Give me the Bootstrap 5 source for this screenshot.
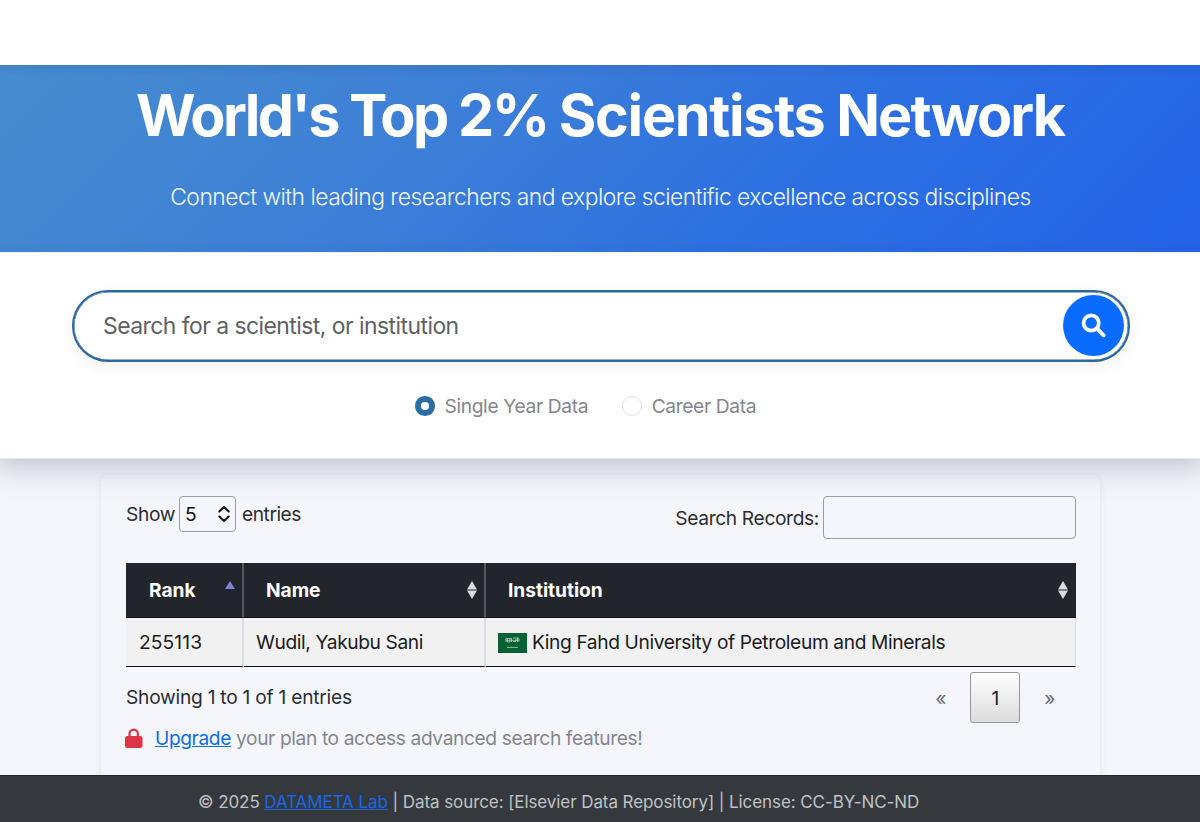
<!DOCTYPE html>
<html lang="en">
<head>
<meta charset="utf-8">
<meta name="viewport" content="width=device-width, initial-scale=1">
<title>World's Top 2% Scientists Network</title>
<link href="https://cdn.jsdelivr.net/npm/bootstrap@5.3.0/dist/css/bootstrap.min.css" rel="stylesheet">
<style>
body{font-family:Inter,"Liberation Sans",sans-serif;font-size:19.2px;line-height:28px;letter-spacing:-.36px;color:#2b2d32;background:#f5f6fb;height:822px;overflow:hidden}
.topbar{height:65px}
.hero{height:187px;background:linear-gradient(180deg,rgba(30,60,130,.12),transparent 12px,transparent 172px,rgba(30,60,140,.05)),linear-gradient(135deg,#478dce 0%,#3b7dd8 40%,#2d70e1 65%,#2463e8 100%)}
.hero h1{font-size:57.5px;line-height:68px;letter-spacing:-1.92px;padding-top:16px;margin:0 0 32px}
.hero h1 .tight{letter-spacing:-2.5px}
.hero h1 .wide{letter-spacing:-1.3px}
.hero p{font-size:22.9px;line-height:32px;font-weight:300;letter-spacing:-.54px;color:#eef6fe;padding-left:1px}
.search-zone{height:207px;position:relative;box-shadow:0 2px 28px 6px rgba(40,60,80,.27);clip-path:inset(0 0 -60px 0);border-bottom:1px solid #e6e8ec;padding-top:37px;border-top:1px solid #eaf3fc}
.search-pill{width:1058px;height:72px;margin-left:72px;border:2px solid #2b6799;padding:0 4px 0 30px;box-shadow:inset 0 0 0 .5px #2b6799,0 5px 16px rgba(0,0,0,.06)}
.search-pill input{font-size:22.9px;letter-spacing:-.53px;background:none;outline:0;height:60px;margin-left:-1px}
.search-pill input::placeholder{color:#5f6063;opacity:1}
.search-go{width:61px;height:61px;background:#0a6cff;margin-top:-1px}
.radio-row{margin:30px 0 0 415px;color:#85858f;height:28px}
.radio-row input{appearance:none;width:19.5px;height:19.5px;border:1px solid #dedfe3;border-radius:50%;margin:0 10px 0 0;background:#fff}
.radio-row input:checked{border:6px solid #2b6ca3}
.radio-row .second{margin-left:34px}
.panel{width:999px;height:300px;margin:16px 0 0 101px;padding:21px 24px 0 25px;border-radius:8px 8px 0 0;box-shadow:0 2px 6px rgba(50,60,80,.1)}
.len-box{width:57px;height:36px;border:1px solid #9b9da3;border-radius:4px;margin:0 6px 0 4px;padding:0 5px 0 5px;color:#111}
.entries{letter-spacing:-.5px}
.filter-box{width:253px;height:43px;border:1px solid #9b9da3;border-radius:4px;background:transparent}
.tools{height:67px}
.grid{table-layout:fixed;border-collapse:separate;border-spacing:0;width:950px}
.grid th{height:55px;background:#22252c;color:#fff;font-weight:700;letter-spacing:-.05px;padding:0 3px 0 22px;border-right:2px solid #54575c;border-bottom:1px solid #111}
.grid th:first-child{padding-left:23px}
.grid td{height:49px;background:#f1f1f1;color:#1b1b1d;padding:0 12px;letter-spacing:-.39px;border-right:2px solid #dadde2;border-bottom:1px solid #111}
.grid .rank{letter-spacing:.1px;padding-left:13px}
.grid th:last-child{border-right:0;padding-right:4px}.grid td:last-child{border-right:1px solid #dadde2}
.flag{margin:2px 1px 0 0}
.below{height:57px;padding-top:5px}
.info{margin-top:11px;letter-spacing:-.25px}
.pager{padding-right:21px;height:51px}
.pager span{color:#66686d}
.pager .current{width:50px;height:51px;margin:0 24px;border:1px solid #97979b;border-radius:3px;background:linear-gradient(#fff,#dcdcdc);color:#222}
.notice{color:#85858f;letter-spacing:-.39px}
.notice svg{margin:0 12px 0 -1px}
a{color:#0d6ee8}
.foot{height:47px;background:#35393d;border-top:1px solid #24282c;color:#bfc2c6;font-size:17px;letter-spacing:-.08px;padding:12px 0 0 198px;position:relative}
.foot a{color:#1567e3}
</style>
</head>
<body>
<div class="topbar bg-white"></div>
<header class="hero text-center text-white">
  <h1 class="fw-bold"><span class="tight">World's Top 2% </span><span class="wide">Scientists</span> Network</h1>
  <p class="mb-0">Connect with leading researchers and explore scientific excellence across disciplines</p>
</header>
<section class="search-zone bg-white">
  <form class="search-pill rounded-pill d-flex align-items-center bg-white">
    <input class="border-0 flex-grow-1 p-0" type="text" placeholder="Search for a scientist, or institution">
    <button class="search-go btn p-0 border-0 rounded-circle d-flex align-items-center justify-content-center" type="button" aria-label="Search">
      <svg width="26" height="26" viewBox="0 0 26 26" fill="none" stroke="#fff"><circle cx="10.200" cy="10" r="7.600" stroke-width="3.700"/><path d="M16 15.700l6.600 6.600" stroke-width="3.900" stroke-linecap="round"/></svg>
    </button>
  </form>
  <div class="radio-row d-flex align-items-center">
    <input type="radio" name="scope" id="single" checked><label for="single">Single Year Data</label>
    <input type="radio" name="scope" id="career" class="second"><label for="career">Career Data</label>
  </div>
</section>
<main class="panel">
  <div class="tools d-flex justify-content-between align-items-start">
    <div class="d-flex align-items-center"><span>Show</span>
      <div class="len-box d-flex align-items-center justify-content-between"><span>5</span>
        <svg width="12" height="18" viewBox="0 0 12 18" fill="none" stroke="#111" stroke-width="2" stroke-linecap="round" stroke-linejoin="round"><path d="M1.300 6.500L6 2l4.700 4.500M1.300 11.500L6 16l4.700-4.500"/></svg></div>
      <span class="entries">entries</span></div>
    <label class="d-flex align-items-center gap-1"><span>Search Records:</span><input class="filter-box" type="text"></label>
  </div>
  <table class="grid">
    <colgroup><col style="width:118px"><col style="width:242px"><col></colgroup>
    <thead><tr>
      <th><div class="d-flex justify-content-between align-items-center"><span>Rank</span><svg width="18" height="22" viewBox="0 0 18 22"><path d="M9 2l5 8H4z" fill="#817fdc"/></svg></div></th>
      <th><div class="d-flex justify-content-between align-items-center"><span>Name</span><svg width="18" height="22" viewBox="0 0 18 22"><path d="M9 2l5 8.500H4zM4 11.500h10l-5 8.500z" fill="#d9dbdd"/></svg></div></th>
      <th><div class="d-flex justify-content-between align-items-center"><span>Institution</span><svg width="18" height="22" viewBox="0 0 18 22"><path d="M9 2l5 8.500H4zM4 11.500h10l-5 8.500z" fill="#d9dbdd"/></svg></div></th>
    </tr></thead>
    <tbody><tr><td class="rank">255113</td><td>Wudil, Yakubu Sani</td>
      <td><div class="d-flex align-items-center gap-1"><svg class="flag" width="29" height="20" viewBox="0 0 29 20"><path d="M0 0h29v20H0z" fill="#046233"/><path d="M8 5v4M9.500 6v3h2.500V6M13.500 5v4M15 8.500h3V6M19.500 5v4M21 5.500v3M8 5.500h5M15 5h6M8 7.300h13M9 14.400h11" stroke="#b5d0bf" stroke-width=".8" fill="none"/></svg><span>King Fahd University of Petroleum and Minerals</span></div></td></tr></tbody>
  </table>
  <div class="below d-flex justify-content-between">
    <div class="info">Showing 1 to 1 of 1 entries</div>
    <div class="pager d-flex align-items-center"><span>«</span><span class="current d-flex align-items-center justify-content-center">1</span><span>»</span></div>
  </div>
  <div class="notice d-flex align-items-center">
    <svg width="18" height="20" viewBox="0 0 18 20"><rect y="8" width="17.500" height="12" rx="2.500" fill="#dc3545"/><path d="M4.500 9V5.800a4.200 4.200 0 0 1 8.400 0V9" fill="none" stroke="#dc3545" stroke-width="2.200"/></svg>
    <span><a href="#">Upgrade</a> your plan to access advanced search features!</span>
  </div>
</main>
<footer class="foot">© 2025 <a href="#">DATAMETA Lab</a> | Data source: [Elsevier Data Repository] | License: CC-BY-NC-ND</footer>
<script src="https://cdn.jsdelivr.net/npm/bootstrap@5.3.0/dist/js/bootstrap.bundle.min.js"></script>
</body>
</html>
